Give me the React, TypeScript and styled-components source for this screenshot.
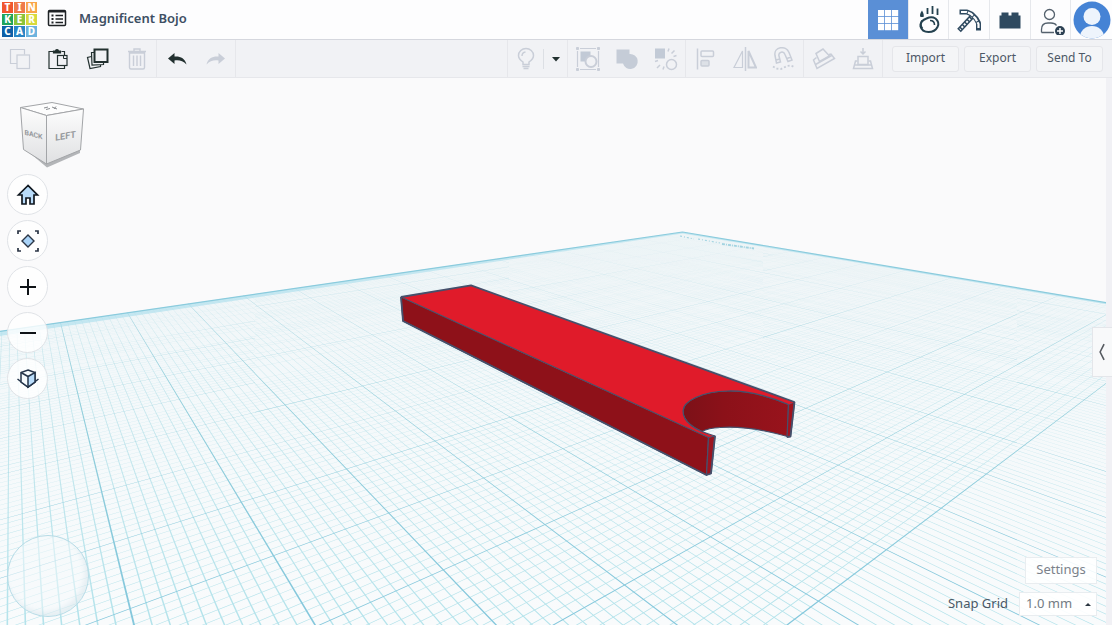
import React from "react";
import styled, { createGlobalStyle } from "styled-components";

const GlobalStyle = createGlobalStyle`
  *, *::before, *::after { box-sizing: border-box; }
  html, body, #root { height: 100%; }
  body {
    margin: 0;
    overflow: hidden;
    background: #f9fafb;
    color: #3c4d5f;
    font-family: "Noto Sans", "Open Sans", sans-serif;
  }
  button, select { font: inherit; color: inherit; margin: 0; }
  button { cursor: pointer; }
`;

const Page = styled.div`
  display: flex;
  flex-direction: column;
  height: 100%;
`;

/* ---------- header ---------- */

const Header = styled.header`
  display: flex;
  align-items: stretch;
  height: 40px;
  background: #fdfdfe;
  border-bottom: 1px solid #d5d7de;
`;

const Logo = styled.a`
  display: grid;
  grid-template-columns: repeat(3, 11px);
  grid-auto-rows: 11px;
  gap: 1px;
  padding: 2px;
  align-content: start;
  text-decoration: none;
`;

const Tile = styled.span<{ $bg: string }>`
  display: flex;
  align-items: center;
  justify-content: center;
  background: ${(p) => p.$bg};
  color: #fff;
  font-size: 10px;
  line-height: 11px;
  font-weight: 800;
`;

const MenuButton = styled.button`
  display: flex;
  align-items: center;
  padding: 0;
  margin: 0 12px 3px 8px;
  border: 0;
  background: none;
`;

const Title = styled.h1`
  margin: 0;
  font-size: 13px;
  line-height: 36px;
  font-weight: 600;
  color: #3d4f63;
`;

const ModeNav = styled.nav`
  display: grid;
  grid-template-columns: repeat(6, 1fr);
  width: 244px;
  margin-left: auto;
`;

const ModeButton = styled.button<{ $active?: boolean }>`
  display: flex;
  align-items: center;
  justify-content: center;
  padding: 0;
  border: 0;
  border-right: 1px solid #e6e8ec;
  background: ${(p) => (p.$active ? "#5a8fd6" : "#fdfdfe")};
  &:last-child { border-right: 0; }
`;

/* ---------- toolbar ---------- */

const Toolbar = styled.div`
  display: flex;
  height: 38px;
  background: #f1f2f5;
  border-bottom: 1px solid #e6e7eb;
`;

const Group = styled.div<{ $push?: boolean; $left?: boolean }>`
  display: flex;
  align-items: center;
  margin-left: ${(p) => (p.$push ? "auto" : "0")};
  border-left: ${(p) => (p.$left ? "1px solid #e6e7eb" : "0")};
  border-right: 1px solid #e6e7eb;
`;

const Tool = styled.button<{ $w?: number }>`
  display: flex;
  align-items: center;
  justify-content: center;
  width: ${(p) => p.$w ?? 39}px;
  height: 37px;
  padding: 0;
  border: 0;
  background: none;
`;

const Divider = styled.span`
  width: 1px;
  height: 20px;
  background: #dcdfe4;
`;

const Actions = styled.div`
  display: flex;
  align-items: center;
  gap: 5px;
  padding: 0 9px;
`;

const ActionButton = styled.button`
  width: 67px;
  height: 26px;
  padding: 0 0 2px;
  border: 1px solid #e5e6ea;
  border-radius: 3px;
  background: #f4f5f7;
  font-size: 12px;
  color: #4c5866;
`;

/* ---------- workspace ---------- */

const Workspace = styled.main`
  position: relative;
  display: flex;
  flex: 1;
  min-height: 0;
`;

const Stage = styled.div`
  position: relative;
  display: flex;
  justify-content: space-between;
  flex: 1;
  min-width: 0;
  overflow: hidden;
`;

const SceneSvg = styled.svg`
  position: absolute;
  inset: 0;
  width: 100%;
  height: 100%;
`;

const PanelEdge = styled.div`
  width: 6px;
  background: #f1f1f5;
`;

const PanelToggle = styled.button`
  position: absolute;
  right: 0;
  top: 249px;
  display: flex;
  align-items: center;
  justify-content: center;
  width: 20px;
  height: 50px;
  padding: 0;
  border: 1px solid #e4e6ea;
  border-right: 0;
  background: #f8f9fa;
`;

const ViewControls = styled.div`
  position: relative;
  display: flex;
  flex-direction: column;
  align-items: flex-start;
  padding: 22px 0 8px 7px;
`;

const CubeButton = styled.button`
  display: flex;
  padding: 0;
  margin: 0 0 4px 11px;
  border: 0;
  background: none;
`;

const RoundList = styled.div`
  display: flex;
  flex-direction: column;
  gap: 5px;
`;

const RoundButton = styled.button`
  display: flex;
  align-items: center;
  justify-content: center;
  width: 41px;
  height: 41px;
  padding: 0;
  border: 1px solid #e0e3e7;
  border-radius: 50%;
  background: rgba(255, 255, 255, 0.8);
`;

const OrbitPad = styled.div`
  width: 82px;
  height: 82px;
  margin-top: auto;
  border: 1px solid #b5dbe6;
  border-radius: 50%;
  background: rgba(246, 249, 251, 0.5);
  box-shadow: inset -3px -4px 5px rgba(170, 200, 215, 0.22);
`;

const GridControls = styled.div`
  position: relative;
  display: flex;
  flex-direction: column;
  align-items: flex-end;
  justify-content: flex-end;
  gap: 8px;
  padding: 0 9px 9px 0;
  font-size: 13px;
`;

const SettingsButton = styled.button`
  width: 72px;
  height: 27px;
  padding: 0 0 3px;
  border: 1px solid #e9edf0;
  background: rgba(255, 255, 255, 0.85);
  color: #7b828b;
`;

const SnapRow = styled.div`
  display: flex;
  align-items: center;
  gap: 11px;
`;

const SnapLabel = styled.label`
  padding-bottom: 2px;
  color: #4a5866;
`;

const SelectWrap = styled.div`
  position: relative;
  width: 78px;
  &::after {
    content: "";
    position: absolute;
    right: 6px;
    top: 11px;
    border: 3px solid transparent;
    border-top: 0;
    border-bottom-color: #2c3640;
    pointer-events: none;
  }
`;

const SnapSelect = styled.select`
  appearance: none;
  display: block;
  width: 100%;
  height: 24px;
  padding: 0 0 2px 6px;
  border: 1px solid #e9edf0;
  border-radius: 0;
  background: rgba(255, 255, 255, 0.9);
  color: #737b84;
`;

/* ---------- perspective grid ---------- */

const HORIZON = 119;
const LEFT_VP = 11;
const RIGHT_VP = 1455;
const DEPTH = 540;
const A_EDGE = 5.968;
const B_EDGE = 6.863;
const A_STEP = 0.3578;
const B_STEP = 0.4619;

const spreadA = (i: number) => A_EDGE - A_STEP * i;
const spreadB = (i: number) => B_EDGE - B_STEP * i;

/** Thin wedges that grow with nearness, one for each line of a family. */
function gridPath(family: "a" | "b", from: number, to: number, step: number, width: number, skipMajor: boolean) {
  const parts: string[] = [];
  const count = Math.round((to - from) / step);
  for (let k = 0; k <= count; k++) {
    if (skipMajor && k % 10 === 0) continue;
    const i = from + k * step;
    const s = family === "a" ? spreadA(i) : spreadB(i);
    const other = family === "a" ? B_EDGE : A_EDGE;
    const vp = family === "a" ? LEFT_VP : RIGHT_VP;
    const sign = family === "a" ? 1 : -1;
    const near = (RIGHT_VP - LEFT_VP) / (s + other);
    if (near > DEPTH || near < 0) continue;
    const pt = (spread: number, h: number) =>
      `${(vp + sign * spread * h).toFixed(2)} ${(HORIZON + h).toFixed(2)}`;
    parts.push(`M${pt(s - width, near)}L${pt(s + width, near)}L${pt(s + width, DEPTH)}L${pt(s - width, DEPTH)}Z`);
  }
  return parts.join("");
}

const minorA = gridPath("a", 0, 20, 0.1, 0.0016, true);
const minorB = gridPath("b", 0, 12, 0.1, 0.0016, true);
const majorA = gridPath("a", 0, 20, 1, 0.0019, false);
const majorB = gridPath("b", 0, 12, 1, 0.0021, false);

const ARCH =
  "M788.5 404.5C768 396 748 390.500 728 391C702 391.500 683 401 683 411C683 423 697 431 715 436";

function Scene() {
  return (
    <SceneSvg viewBox="0 78 1106 547" preserveAspectRatio="xMidYMin slice" aria-label="Workplane">
      <defs>
        <linearGradient id="plane" gradientUnits="userSpaceOnUse" x1="0" y1="232" x2="0" y2="625">
          <stop offset="0" stopColor="#eef4f6" />
          <stop offset="0.35" stopColor="#f3f8fa" />
          <stop offset="1" stopColor="#f9fbfc" />
        </linearGradient>
        <linearGradient id="fine" gradientUnits="userSpaceOnUse" x1="0" y1="232" x2="0" y2="625">
          <stop offset="0" stopColor="#d4e9ee" stopOpacity="0.3" />
          <stop offset="0.3" stopColor="#bfe3ea" stopOpacity="0.75" />
          <stop offset="1" stopColor="#b4e3eb" />
        </linearGradient>
        <linearGradient id="bold" gradientUnits="userSpaceOnUse" x1="0" y1="232" x2="0" y2="625">
          <stop offset="0" stopColor="#a9d6e2" stopOpacity="0.6" />
          <stop offset="0.4" stopColor="#93cfdb" />
          <stop offset="1" stopColor="#84c7dc" />
        </linearGradient>
        <linearGradient id="wall" x1="0" x2="1" y1="0" y2="0">
          <stop offset="0" stopColor="#7c1118" />
          <stop offset="0.4" stopColor="#8c1119" />
          <stop offset="1" stopColor="#98131c" />
        </linearGradient>
      </defs>
      <rect x="0" y="78" width="1106" height="547" fill="#fafafb" />
      <path d="M682.500 232L-60 340V640H1180V315Z" fill="url(#plane)" />
      <path d={minorA} fill="url(#fine)" />
      <path d={minorB} fill="url(#fine)" />
      <path d={majorA} fill="url(#bold)" />
      <path d={majorB} fill="url(#bold)" />
      <path d="M682.500 232L-60 340V345L682.500 233.500L1180 316.500V315Z" fill="#a8deec" fillOpacity="0.6" />
      <path d="M-60 340L682.500 232L1180 315" fill="none" stroke="#8acbdd" strokeWidth="1.200" />
      <path d="M680 236l14 3M698 239l22 4" stroke="#a3d4e1" strokeWidth="1.200" strokeDasharray="2 2 1 2" fill="none" />
      <path d="M722 244l32 4.500" stroke="#a3d4e1" strokeWidth="1.800" strokeDasharray="3 1 1 1" fill="none" />

      <g strokeLinejoin="round" stroke="#46506b" strokeWidth="1.200">
        <path
          d="M788.5 404.5C768 396 748 390.500 728 391C702 391.500 683 401 683 411C683 420 692 427 702 431.500Q708 428 720 427.500C740 426 765 430 787.500 436.500Z"
          fill="url(#wall)"
        />
        <path d="M788.500 404.500L794.500 402L790.500 436.500L787 437Z" fill="#a0141f" />
        <path
          d="M401 297L471 285.300L794.500 402L788.500 404.500C768 396 748 390.500 728 391C702 391.500 683 401 683 411C683 423 697 431 715 436L708.500 437.500Z"
          fill="#e01b2a"
          stroke="none"
        />
        <path d="M401 297L708.500 437.500L706.500 475L403 321Z" fill="#8e1119" />
        <path d="M708.500 437.500L715 436L711 473.500L706.500 475Z" fill="#9b1520" />
        <path d={ARCH} fill="none" />
        <path d="M401 297L471 285.300L794.500 402" fill="none" strokeWidth="1.800" />
        <path d="M401 297L403 321L706.500 475L711 473.500L715 436" fill="none" strokeWidth="1.800" />
        <path d="M794.500 402L790.500 436.500L787 437" fill="none" strokeWidth="1.800" />
      </g>
    </SceneSvg>
  );
}

/* ---------- icons ---------- */

const FAINT = "#c9ced8";
const DARK = "#22302f";
const NAVY = "#2f4a60";

function Icon({
  size = 24,
  stroke = FAINT,
  width = 1.5,
  children,
}: {
  size?: number;
  stroke?: string;
  width?: number;
  children: React.ReactNode;
}) {
  return (
    <svg width={size} height={size} viewBox={`0 0 ${size} ${size}`} fill="none" stroke={stroke} strokeWidth={width} aria-hidden="true">
      {children}
    </svg>
  );
}

const ListIcon = () => (
  <Icon size={20} stroke="#1f2326">
    <rect x="1.500" y="2.500" width="17" height="15" rx="1" />
    <path d="M2 3.500h16" strokeWidth="2" />
    <path d="M4.500 7.500h2M4.500 11h2M4.500 14.500h2" strokeWidth="2" />
    <path d="M8.500 7.500h7.500M8.500 11h7.500M8.500 14.500h7.500" />
  </Icon>
);

const CopyIcon = () => (
  <Icon width={1.2}>
    <path d="M9 16.500H2.500V2.500h14V7.500" />
    <rect x="9" y="8" width="12.500" height="13.500" />
  </Icon>
);

const PasteIcon = () => (
  <Icon stroke={DARK} width={1.2}>
    <path d="M6 4.500H2V21.500h15.500V19M14.500 4.500h3v3.500" />
    <path d="M6.500 6V4h2Q8.500 2.500 10 2.500T11.500 4h2v2Z" fill={DARK} />
    <rect x="10.500" y="8.500" width="9.500" height="10" fill="#f1f2f5" />
    <path d="M16.500 8.500V11.500H20" strokeWidth="1" />
  </Icon>
);

const DuplicateIcon = () => (
  <Icon stroke={DARK} width={1.2}>
    <rect x="8.500" y="2.500" width="13" height="12.500" strokeWidth="2" />
    <path d="M8 5.500H5.500L6 18l11.500-.5V15" />
    <path d="M5.500 9.500L1.500 10.500 4 21.500l10.500-2V18" />
  </Icon>
);

const TrashIcon = () => (
  <Icon width={1.4}>
    <path d="M3 4.500h18M9 4.500V2h6v2.500M4.500 6v14.500q0 1.500 1.500 1.500h12q1.500 0 1.500-1.500V6Z" />
    <path d="M8.500 8.500v10.500M12 8.500v10.500M15.500 8.500v10.500" />
  </Icon>
);

const UndoIcon = ({ flip }: { flip?: boolean }) => (
  <Icon stroke="none">
    <path
      transform={flip ? "matrix(-1 0 0 1 24 0)" : undefined}
      fill={flip ? FAINT : DARK}
      d="M3 11.500L9.500 6v3.500C15 9 20 11 21.500 17.500C18 13.500 14 13 9.500 13.500V17Z"
    />
  </Icon>
);

const BulbIcon = () => (
  <Icon>
    <path d="M9 17.500v-2.500Q4.500 12 4.500 8.500C4.500 4.500 8 1.500 12 1.500s7.500 3 7.500 7Q19.500 12 15 15v2.500Z" />
    <path d="M8.500 19.500h7M9.500 21.500h5M8 9q0-3.500 3.500-4" />
  </Icon>
);

const CaretIcon = () => (
  <Icon size={10} stroke="none">
    <path d="M1 3h8L5 7.500Z" fill={DARK} />
  </Icon>
);

const GroupIcon = () => (
  <Icon width={1.2}>
    <path d="M4 1.500h16M4 22.500h16M1.500 4v16M22.500 4v16" />
    <path d="M.5.500h2v2h-2zM21.500.500h2v2h-2zM.5 21.500h2v2h-2zM21.500 21.500h2v2h-2z" fill={FAINT} strokeWidth="1" />
    <rect x="4.500" y="4.500" width="10" height="10" fill="#c2cad6" stroke="none" />
    <circle cx="15" cy="14.500" r="5.500" fill="#f1f2f5" strokeWidth="2" />
  </Icon>
);

const UnionIcon = () => (
  <Icon stroke="none">
    <path d="M1.500 2.500h13v4.500a7.500 7.500 0 1 1-6.500 9.500h-6.500Z" fill="#c5ccd7" />
  </Icon>
);

const UngroupIcon = () => (
  <Icon>
    <rect x="1" y="1.500" width="10" height="10" fill="#c2cad6" stroke="none" />
    <circle cx="17.500" cy="17.500" r="5" />
    <path d="M14 4.500l1-3M17.500 6.500l3-3M19.500 9.500l3-1M1 14.500l3-1M3 21l3-3M9 22.500l1-3" />
  </Icon>
);

const AlignIcon = () => (
  <Icon>
    <path d="M3.500 1.500v21" />
    <rect x="7" y="4" width="12.500" height="5.500" rx="1" />
    <rect x="7" y="13.500" width="8" height="5.500" rx="1" fill="#dde1e7" />
  </Icon>
);

const MirrorIcon = () => (
  <Icon>
    <path d="M12.500 0v24" />
    <path d="M9.500 4v16.500H1Z" strokeWidth="1.200" />
    <path d="M15.500 4v16.500H23Z" strokeWidth="2" />
  </Icon>
);

const MagnetIcon = () => (
  <Icon>
    <path d="M4.500 16L3 8.500C1.500-.5 14-2 17 5.500l3 7.500-4 1.500-3-7C11.500 3.500 6 5 7 9l1.500 6ZM4 13l4-1M15 11.500l4-1.500" />
    <path d="M1 19.500l3 2 5 .5 6-3 4-.5 4 2" strokeDasharray="2 2" strokeWidth="1.800" />
  </Icon>
);

const WorkplaneIcon = () => (
  <Icon>
    <path d="M4 6.500L11 2l6.500 7-10 5.500Z" />
    <path d="M4.500 10.500L1.500 13l3.500 8.500 17.500-10-3.500-4.500-2 .5M3.500 17.500L20.500 8" />
  </Icon>
);

const DropIcon = () => (
  <Icon>
    <path d="M12 1v6M9.500 4.500l2.500 2.500 2.500-2.500" />
    <path d="M7 17.500V9.500h10v8Z" />
    <path d="M6.500 14H4.500l-2 7.500h19l-2-7.500h-2M3.500 18h17" />
  </Icon>
);

const GridIcon = () => (
  <Icon size={24} stroke="none">
    {[0, 1, 2].map((r) =>
      [0, 1, 2].map((c) => <rect key={`${r}${c}`} x={2 + c * 7} y={2 + r * 7} width="6.200" height="6.200" fill="#fff" />)
    )}
  </Icon>
);

const SimIcon = () => (
  <Icon size={30} stroke="#24414f" width={2}>
    <path d="M13.500 13.500q5-2.500 9 0 4.500 4 2 8.500-2.500 5-9 5-6.500 0-8-5.500-.5-5.500 6-8Z" />
    <path d="M9 15.500q-2.500 4 .5 8M17 15.500q4.500 0 4.500 4.500" strokeWidth="1.600" />
    <path d="M14.500 3v6M19.500 1v8M24.500 3.500v6.500" strokeWidth="1.800" />
    <path d="M9 5.500q-3 4.500-1.500 6.500h3q1-2.500-1.500-6.500Z" fill="#24414f" stroke="none" />
  </Icon>
);

const PickaxeIcon = () => (
  <Icon size={26} stroke={NAVY}>
    <path d="M17 8.500L3 23.500" strokeWidth="5" />
    <path d="M16.500 9L4 22.500" stroke="#fdfdfe" strokeWidth="2" strokeDasharray="2 1.500" />
    <path d="M3.500 5H11L15.500 7L20 11.500L22.500 16V23.500" strokeWidth="5" strokeLinejoin="bevel" />
    <path d="M5 5H10.500L15 7L19.500 11.500L22.500 17V22" stroke="#fdfdfe" strokeWidth="2.200" strokeDasharray="6 1" />
  </Icon>
);

const BrickIcon = () => (
  <Icon size={24} stroke="none">
    <path d="M1.500 20.500V7.500h2V4.500h7v3h3V4.500h7v3h2v13Z" fill={NAVY} />
  </Icon>
);

const InviteIcon = () => (
  <Icon size={30} stroke="#54616d" width={1.3}>
    <circle cx="14.500" cy="9.500" r="5" />
    <path d="M6.500 27.500v-3q0-6.500 6.500-6.500h3q4 0 5.500 2.500M6.500 27.500H19" />
    <circle cx="25" cy="26" r="5" fill="#2e4254" stroke="none" />
    <path d="M25 23v6M22 26h6" stroke="#fff" strokeWidth="1.500" />
  </Icon>
);

const AvatarIcon = () => (
  <Icon size={38} stroke="none">
    <clipPath id="avatar">
      <circle cx="19" cy="19" r="18.500" />
    </clipPath>
    <g clipPath="url(#avatar)">
      <rect width="38" height="38" fill="#4583d5" />
      <circle cx="19" cy="15.500" r="8.500" fill="#eef4fc" />
      <ellipse cx="19" cy="36" rx="12" ry="11" fill="#eef4fc" />
    </g>
  </Icon>
);

const HomeIcon = () => (
  <Icon stroke="#111820" width={1.7}>
    <path d="M12 2.500L2.500 12H6v9h4V15h4v6h4V12h3.500Z" fill="#b9dcfa" />
  </Icon>
);

const FitIcon = () => (
  <Icon stroke="#2b3545" width={1.7}>
    <path d="M2 5V2h3M19 2h3v3M22 19v3h-3M5 22H2v-3" />
    <path d="M12 6l6 6-6 6-6-6Z" fill="#a9d3f8" strokeWidth="1.400" />
  </Icon>
);

const PlusIcon = () => (
  <Icon stroke="#0f1317" width={2}>
    <path d="M12 4v16M4 12h16" />
  </Icon>
);

const MinusIcon = () => (
  <Icon stroke="#0f1317" width={2}>
    <path d="M4 12h16" />
  </Icon>
);

const BoxIcon = () => (
  <Icon stroke="#24344a" width={1.5}>
    <path d="M1.500 12L12 20l10.500-8" />
    <path d="M12 3l7 2.500V15l-7 5-7-5V5.500Z" fill="#f5fafd" />
    <path d="M12 9.500l7-4V15l-7 5Z" fill="#b9dcfa" />
    <path d="M5 5.500l7 4" />
  </Icon>
);

const ChevronIcon = () => (
  <Icon size={24} stroke="#555a60" width={2}>
    <path d="M14 2L9 12l5 10" />
  </Icon>
);

const CubeIcon = () => (
  <svg width="68" height="70" viewBox="18 100 68 70" aria-hidden="true">
    <defs>
      <linearGradient id="cube" x1="0" y1="0" x2="0" y2="1">
        <stop offset="0" stopColor="#fdfdfd" />
        <stop offset="1" stopColor="#dfe0e2" />
      </linearGradient>
    </defs>
    <path d="M25 149L47 167.500L80 153L80 149L47 160Z" fill="#b3b5b8" />
    <g stroke="#a3a5a8" strokeWidth="1" strokeLinejoin="round">
      <path d="M20.500 107.500L52 102.500L83.500 109L46.500 115.500Z" fill="#fdfdfd" />
      <path d="M20.500 107.500L46.500 115.500V164L23.500 149.500Z" fill="url(#cube)" />
      <path d="M46.500 115.500L83.500 109L80.500 150L46.500 164Z" fill="url(#cube)" />
    </g>
    <path d="M44 108l4-1M46 109.500l4-1M52 107l5 2M54 109l2-2.500" stroke="#8b8e92" strokeWidth="1" />
    <g fontFamily="Roboto, sans-serif" fontWeight="700" fill="#96999d" textAnchor="middle">
      <text fontSize="7" transform="translate(33.500 137) skewY(14)">BACK</text>
      <text fontSize="9" transform="translate(65.500 139) skewY(-10)">LEFT</text>
    </g>
  </svg>
);

const TILES: [string, string][] = [
  ["T", "#f0562f"], ["I", "#ef7a4a"], ["N", "#f9a54a"],
  ["K", "#1fa45c"], ["E", "#8ac43a"], ["R", "#d8da3c"],
  ["C", "#0f5fa6"], ["A", "#2a86c6"], ["D", "#6db3de"],
];

const VIEW_BUTTONS: [string, React.FC][] = [
  ["Home view", HomeIcon],
  ["Fit all in view", FitIcon],
  ["Zoom in", PlusIcon],
  ["Zoom out", MinusIcon],
  ["Switch to orthographic view", BoxIcon],
];

export default function App() {
  return (
    <Page>
      <GlobalStyle />
      <Header>
        <Logo href="#" aria-label="Tinkercad">
          {TILES.map(([letter, bg]) => (
            <Tile key={letter} $bg={bg}>{letter}</Tile>
          ))}
        </Logo>
        <MenuButton aria-label="Designs"><ListIcon /></MenuButton>
        <Title>Magnificent Bojo</Title>
        <ModeNav aria-label="Modes">
          <ModeButton $active aria-label="3D design"><GridIcon /></ModeButton>
          <ModeButton aria-label="Sim lab"><SimIcon /></ModeButton>
          <ModeButton aria-label="Blocks"><PickaxeIcon /></ModeButton>
          <ModeButton aria-label="Bricks"><BrickIcon /></ModeButton>
          <ModeButton aria-label="Invite people"><InviteIcon /></ModeButton>
          <ModeButton aria-label="Account"><AvatarIcon /></ModeButton>
        </ModeNav>
      </Header>

      <Toolbar role="toolbar">
        <Group>
          <Tool aria-label="Copy"><CopyIcon /></Tool>
          <Tool aria-label="Paste"><PasteIcon /></Tool>
          <Tool aria-label="Duplicate"><DuplicateIcon /></Tool>
          <Tool aria-label="Delete"><TrashIcon /></Tool>
        </Group>
        <Group>
          <Tool aria-label="Undo"><UndoIcon /></Tool>
          <Tool aria-label="Redo"><UndoIcon flip /></Tool>
        </Group>
        <Group $push $left>
          <Tool $w={35} aria-label="Show all"><BulbIcon /></Tool>
          <Divider />
          <Tool $w={23} aria-label="Visibility options"><CaretIcon /></Tool>
        </Group>
        <Group>
          <Tool aria-label="Group"><GroupIcon /></Tool>
          <Tool aria-label="Union"><UnionIcon /></Tool>
          <Tool aria-label="Ungroup"><UngroupIcon /></Tool>
        </Group>
        <Group>
          <Tool aria-label="Align"><AlignIcon /></Tool>
          <Tool aria-label="Mirror"><MirrorIcon /></Tool>
          <Tool aria-label="Cruise"><MagnetIcon /></Tool>
        </Group>
        <Group>
          <Tool aria-label="Workplane"><WorkplaneIcon /></Tool>
          <Tool aria-label="Drop to workplane"><DropIcon /></Tool>
        </Group>
        <Actions>
          <ActionButton>Import</ActionButton>
          <ActionButton>Export</ActionButton>
          <ActionButton>Send To</ActionButton>
        </Actions>
      </Toolbar>

      <Workspace>
        <Stage>
          <Scene />
          <ViewControls>
            <CubeButton aria-label="View cube"><CubeIcon /></CubeButton>
            <RoundList>
              {VIEW_BUTTONS.map(([label, Glyph]) => (
                <RoundButton key={label} aria-label={label}><Glyph /></RoundButton>
              ))}
            </RoundList>
            <OrbitPad />
          </ViewControls>
          <GridControls>
            <SettingsButton>Settings</SettingsButton>
            <SnapRow>
              <SnapLabel htmlFor="snap">Snap Grid</SnapLabel>
              <SelectWrap>
                <SnapSelect id="snap" defaultValue="1.0">
                  <option value="0.5">0.5 mm</option>
                  <option value="1.0">1.0 mm</option>
                  <option value="2.0">2.0 mm</option>
                </SnapSelect>
              </SelectWrap>
            </SnapRow>
          </GridControls>
        </Stage>
        <PanelEdge />
        <PanelToggle aria-label="Show shapes panel"><ChevronIcon /></PanelToggle>
      </Workspace>
    </Page>
  );
}
